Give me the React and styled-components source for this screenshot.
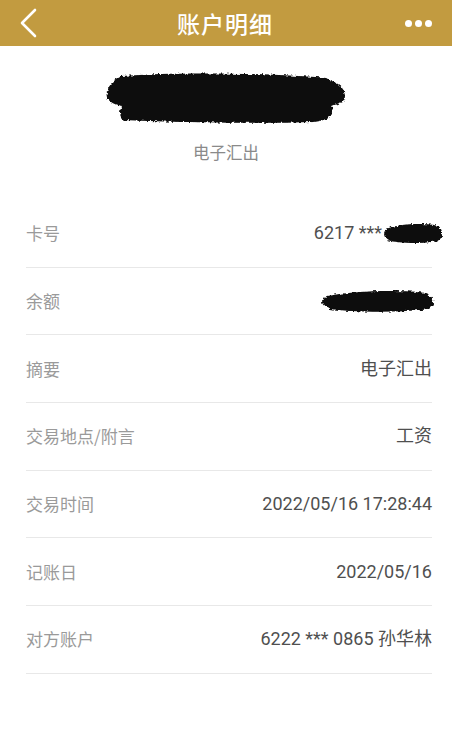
import React from 'react';
import styled, { createGlobalStyle } from 'styled-components';

const GlobalStyle = createGlobalStyle`
  html, body {
    margin: 0;
    padding: 0;
    background: #fff;
  }
  body {
    font-family: "Roboto", "Noto Sans CJK SC", sans-serif;
  }
`;

const rows = [
  { label: '卡号', value: '6217 ***', blob: { w: 62, h: 23, over: 12 } },
  { label: '余额', value: '', blob: { w: 119, h: 25, over: 5 } },
  { label: '摘要', value: '电子汇出' },
  { label: '交易地点/附言', value: '工资' },
  { label: '交易时间', value: '2022/05/16 17:28:44' },
  { label: '记账日', value: '2022/05/16' },
  { label: '对方账户', value: '6222 *** 0865 孙华林' },
];

const Scribble = ({ id, width, height, d, viewBox }) => (
  <svg width={width} height={height} viewBox={viewBox} preserveAspectRatio="none">
    <defs>
      <filter id={id} x="-10%" y="-20%" width="120%" height="140%">
        <feTurbulence type="fractalNoise" baseFrequency="0.35" numOctaves="2" seed="3" />
        <feDisplacementMap in="SourceGraphic" scale="4" xChannelSelector="R" yChannelSelector="G" />
      </filter>
    </defs>
    <path d={d} fill="#080808" filter={`url(#${id})`} />
  </svg>
);

const smallBlob =
  'M5,7 C20,1 48,1 58,4 C64,9 63,17 57,20 C40,23 16,22 6,19 C1,15 1,10 5,7 Z';

const Main = () => {
  return (
    <Page>
      <GlobalStyle />
      <NavBar>
        <NavSide>
          <svg width="20" height="30" viewBox="0 0 20 30">
            <path d="M17 2 L4 15 L17 28" fill="none" stroke="#fff" strokeWidth="2.6" strokeLinecap="round" strokeLinejoin="round" />
          </svg>
        </NavSide>
        <Title>账户明细</Title>
        <NavSide right>
          <Dot />
          <Dot />
          <Dot />
        </NavSide>
      </NavBar>

      <Summary>
        <Scribble
          id="amountBlob"
          width={244}
          height={54}
          viewBox="0 0 244 54"
          d="M18,6 C80,1 180,4 222,8 L234,14 C242,20 243,28 238,32 L228,36 C230,44 226,50 210,52 C150,54 60,52 20,50 C14,46 16,40 18,36 C6,34 1,28 3,22 C5,14 10,10 18,6 Z"
        />
        <SubTitle>电子汇出</SubTitle>
      </Summary>

      <List>
        {rows.map((r) => (
          <Row key={r.label}>
            <Label>{r.label}</Label>
            <Value>
              {r.value}
              {r.blob && (
                <BlobWrap over={r.blob.over}>
                  <Scribble
                    id={`blob-${r.label}`}
                    width={r.blob.w}
                    height={r.blob.h}
                    viewBox="0 0 64 24"
                    d={smallBlob}
                  />
                </BlobWrap>
              )}
            </Value>
          </Row>
        ))}
      </List>
    </Page>
  );
};

const Page = styled.div`
  width: 452px;
  min-height: 743px;
  background: #fff;
`;

const NavBar = styled.header`
  height: 46px;
  background: #c29b40;
  display: flex;
  align-items: center;
  justify-content: space-between;
  padding: 0 20px 0 18px;
  box-sizing: border-box;
`;

const NavSide = styled.div`
  width: 40px;
  display: flex;
  align-items: center;
  justify-content: ${(p) => (p.right ? 'flex-end' : 'flex-start')};
  gap: 3px;
`;

const Dot = styled.span`
  width: 7px;
  height: 7px;
  border-radius: 50%;
  background: #fff;
`;

const Title = styled.h1`
  margin: 0;
  color: #fff;
  font-family: "Noto Sans CJK SC", sans-serif;
  font-size: 23px;
  font-weight: 500;
  line-height: 30px;
  letter-spacing: 1px;
`;

const Summary = styled.section`
  height: 154px;
  display: flex;
  flex-direction: column;
  align-items: center;
  padding-top: 24px;
  box-sizing: border-box;
`;

const SubTitle = styled.div`
  margin-top: 18px;
  font-family: "Noto Sans CJK SC", sans-serif;
  font-size: 16.5px;
  line-height: 20px;
  color: #8a8a8a;
`;

const List = styled.div`
  margin: 0 20px 0 26px;
`;

const Row = styled.div`
  height: 67.7px;
  box-sizing: border-box;
  border-bottom: 1px solid #e8e8e8;
  display: flex;
  align-items: center;
  justify-content: space-between;
`;

const Label = styled.span`
  font-family: "Noto Sans CJK SC", sans-serif;
  font-size: 17px;
  line-height: 20px;
  color: #9a9a9a;
`;

const Value = styled.span`
  display: flex;
  align-items: center;
  font-family: "Roboto", "Noto Sans CJK SC", sans-serif;
  font-size: 18px;
  font-weight: 400;
  line-height: 20px;
  color: #4f4f4f;
`;

const BlobWrap = styled.span`
  display: flex;
  margin-right: -${(p) => p.over}px;
`;

export default Main;
